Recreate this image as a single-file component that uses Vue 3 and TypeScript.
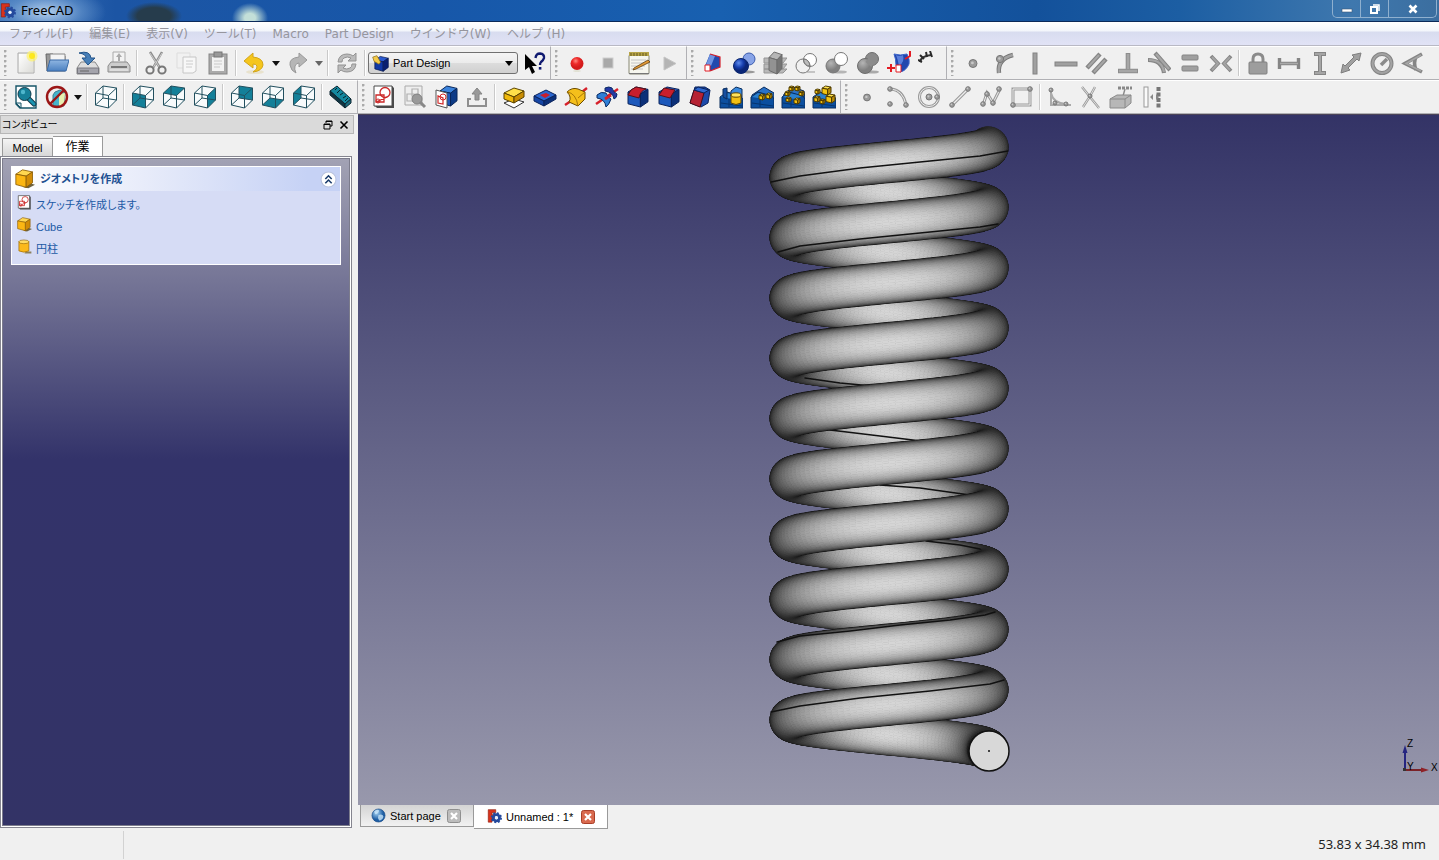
<script setup lang="ts">
import { ref } from 'vue'

type Item =
  | { kind: 'btn'; icon: string; label: string; off?: boolean }
  | { kind: 'arrow'; label: string; off?: boolean }
  | { kind: 'sep' }
  | { kind: 'combo' }

const btn = (icon: string, label: string, off = false): Item => ({ kind: 'btn', icon, label, off })
const arrow = (label: string, off = false): Item => ({ kind: 'arrow', label, off })
const sep: Item = { kind: 'sep' }

/* ---------- icon building blocks (24 x 24 grid) ---------- */

const poly = (pts: string, fill: string, stroke = 'none', w = 1) =>
  `<polygon points="${pts}" fill="${fill}" stroke="${stroke}" stroke-width="${w}" stroke-linejoin="round"/>`
const line = (d: string, stroke: string, w: number, extra = '') =>
  `<path d="${d}" fill="none" stroke="${stroke}" stroke-width="${w}" ${extra}/>`
const dot = (x: number, y: number, r = 2.3) =>
  `<circle cx="${x}" cy="${y}" r="${r}" fill="#9b9b9b" stroke="#777" stroke-width="1"/><circle cx="${x - 0.6}" cy="${y - 0.6}" r="${r * 0.35}" fill="#c8c8c8"/>`

const box = (x: number, y: number, w: number, h: number, top: string, left: string, right: string, edge: string) => {
  const a = `${x},${y + h * 0.25}`
  const b = `${x + w * 0.4},${y}`
  const c = `${x + w},${y + h * 0.12}`
  const d = `${x + w * 0.62},${y + h * 0.36}`
  const e = `${x + w * 0.62},${y + h}`
  const f = `${x},${y + h * 0.84}`
  const g = `${x + w},${y + h * 0.74}`
  return poly(`${a} ${b} ${c} ${d}`, top, edge) + poly(`${a} ${d} ${e} ${f}`, left, edge) + poly(`${d} ${c} ${g} ${e}`, right, edge)
}

const WIRE = 'M1.5 8L14.5 10.500V23L1.500 20ZM9 1L22.500 3V15L9 13ZM1.500 8L9 1M14.500 10.500L22.500 3M14.500 23L22.500 15M1.500 20L9 13'
const viewCube = (face: string) =>
  poly('1.5,8 9,1 22.5,3 22.5,15 14.5,23 1.5,20', '#f8fbfc') + (face ? poly(face, '#148099') : '') + line(WIRE, '#22505f', 1)

const sketch = (c: string, edge: string) =>
  `<path d="M3 1H20L22 3V23H5L2 20V2Z" fill="${edge}"/><path d="M2 1H20V21H2Z" fill="#fff" stroke="${edge}" stroke-width="1"/>` +
  `<circle cx="13" cy="7.5" r="5" fill="none" stroke="${c}" stroke-width="1.3"/>` +
  line('M4 10H12V17H4ZM4 17L15 12', c, 1.3) + `<circle cx="6" cy="16" r="2" fill="none" stroke="${c}"/>`

const terrain = poly('1,12 8,7 22,11 24,14 24,23 1,23', '#0b4f9f', '#092c5c') + poly('2,12 8,8 21,11 14,14', '#2a80cf') +
  line('M2 18L23 21M10 14V22', '#06356f', 1)
const goldBit = (x: number, y: number, s = 5) => box(x, y, s, s, '#ffe14a', '#f3c412', '#b88a06', '#4e3b00')
const noteBook = '<rect x="2" y="4" width="20" height="19" rx="1" fill="#f6f6ee" stroke="#888874"/><rect x="2" y="1" width="20" height="4" fill="#b7a447"/><path d="M4 2V5M7 2V5M10 2V5M13 2V5M16 2V5M19 2V5" stroke="#625820" stroke-width="1"/><path d="M4 9H19M4 12H19M4 15H18M4 18H16" stroke="#c4c4c4"/><path d="M7 17L21 9L23 11L9 18L6 19Z" fill="#e39a34" stroke="#5d3d11" stroke-width=".8"/><path d="M2 22.5H22" stroke="#777" />'

const icons: Record<string, string> = {
  logo: '<path d="M2 1H14V6H8V9H12V14H8V21H2Z" fill="#d8321c" stroke="#8e1a0c"/><circle cx="15" cy="14" r="5" fill="none" stroke="#254a9d" stroke-width="4.5"/><circle cx="15" cy="14" r="7.5" fill="none" stroke="#254a9d" stroke-width="3" stroke-dasharray="3 2.9"/><circle cx="15" cy="14" r="2.4" fill="#e8eefc"/>',
  new: '<path d="M4 2H20V22H4Z" fill="#f1f1ee" stroke="#aaa"/><path d="M5 3H19V21H5Z" fill="url(#paper)"/><circle cx="18" cy="5" r="5.500" fill="#fff36a" opacity=".7"/><circle cx="18" cy="5" r="3" fill="#ffe600" opacity=".8"/>',
  open: '<path d="M1 3H8L10 5H20V20H2Z" fill="#999" stroke="#666"/><path d="M5 3H20V12H5Z" fill="#f4f4f4" stroke="#888"/><path d="M5 9H24L21 20H2Z" fill="url(#folder)" stroke="#3a6ba8"/>',
  save: '<path d="M5 11H19L23 17V23H1V17Z" fill="#dedede" stroke="#888"/><path d="M1.500 17H22.500V22.500H1.500Z" fill="#a4a4ac" stroke="#787880"/><path d="M4 20H13" stroke="#666"/><path d="M3 2Q14 -1 15 7H19L12 14L6 7H10Q10 3 3 2Z" fill="#477fb8" stroke="#24558a"/>',
  print: '<path d="M6 1H18V12H6Z" fill="#f3f3f3" stroke="#aaa"/><path d="M12 2L15 6H13V10H11V6H9Z" fill="#aaa"/><path d="M4 11H20L23 15V21H1V15Z" fill="#ccc" stroke="#8c8c8c"/><path d="M4 16H20" stroke="#777" stroke-width="2"/><path d="M3 19H21" stroke="#eee"/>',
  cut: line('M6 1L16 17M18 1L9 17', '#8e8e8e', 2.4) + line('M6 2L16 17M18 2L9 17', '#ddd', 0.8) + '<circle cx="6" cy="19" r="3.6" fill="none" stroke="#777" stroke-width="2"/><circle cx="18" cy="19" r="3.600" fill="none" stroke="#777" stroke-width="2"/>',
  copy: '<path d="M2 2H15V17H2Z" fill="#f1f1f1" stroke="#ddd"/><path d="M8 6H21V20L18 22H8Z" fill="#f7f7f7" stroke="#c6c6c6"/><path d="M11 10H18M11 13H18M11 16H17" stroke="#ccc"/>',
  paste: '<rect x="3" y="3" width="18" height="20" fill="#aaa" stroke="#858585"/><path d="M6 6H18V20H6Z" fill="#f2f2f2"/><rect x="8" y="1" width="8" height="5" fill="#999" stroke="#777"/><path d="M8 10H16M8 13H16M8 16H14" stroke="#c8c8c8"/>',
  undo: '<ellipse cx="12" cy="21" rx="9" ry="2" fill="#e6dfc4" opacity=".8"/><path d="M1 10L10 2V6Q20 7 20 14Q19 20 10 21Q15 18 14 15Q13 13 10 13V17Z" fill="#f5c61d" stroke="#d2a51a"/>',
  redo: '<path d="M21 9L13 2V6Q3 7 4 14Q5 20 10 22Q8 18 9 15Q10 12 13 12V16Z" fill="#b6b6b6" stroke="#999"/>',
  refresh: '<path d="M3 11Q4 3 12 3Q16 3 18 5L21 2V10H13L16 7Q12 5 9 7Q7 8 7 11Z" fill="#bbb" stroke="#939393"/><path d="M21 13Q20 21 12 21Q8 21 6 19L3 22V14H11L8 17Q12 19 15 17Q17 16 17 13Z" fill="#bbb" stroke="#939393"/>',
  part: box(4, 2, 19, 21, '#2c5bd0', '#1138a4', '#091f70', '#061650') + '<path d="M1 3L7 1L12 10L10 13L3 9Z" fill="#f3ca4a" stroke="#8c6c14"/>',
  whats: '<path d="M3 3V19L7 16L10 23L13 21L10 15H15Z" fill="#000"/><path d="M13.500 7Q14 2.500 18 2.500Q22.500 3 22 7Q21.500 9 19 11Q18 12 18 14" fill="none" stroke="#101a70" stroke-width="2.400"/><rect x="16.800" y="16" width="2.600" height="2.600" fill="#101a70"/>',
  record: '<circle cx="12" cy="12.500" r="6.500" fill="url(#red)"/><ellipse cx="12" cy="20" rx="4" ry=".8" fill="#ddc" />',
  stop: '<rect x="7" y="7" width="10" height="10" fill="#a9a9a9" stroke="#cecece"/>',
  macro: noteBook,
  play: '<path d="M6 6L18 12.500L6 19Z" fill="#b4b4b4" stroke="#c4c4c4"/>',
  loft: '<path d="M9 3L19 6V16L9 20L4 19V15Z" fill="#2149ae"/><path d="M9 3L14 5L10 15L5 14Z" fill="#6f93e2"/><path d="M9 3L19 6V16L9 20" fill="none" stroke="#d2202c" stroke-width="1.200"/><path d="M4 14H9V20H4Z" fill="#fff" stroke="#e01c24"/>',
  boolean: '<circle cx="17" cy="8" r="6" fill="#88a4e8" stroke="#3b5cae"/><ellipse cx="16" cy="21" rx="7" ry="1.500" fill="#999"/><circle cx="9" cy="15" r="7.500" fill="url(#ball)" stroke="#08246c"/>',
  section: '<path d="M1 7H24L20 12H1ZM1 13H24L20 18H1ZM1 18H24L20 22H1Z" fill="#b9b9b9" stroke="#969696"/>' + box(6, 1, 13, 22, '#b5b5b5', '#929292', '#747474', '#6c6c6c'),
  common: '<circle cx="16" cy="9" r="6.500" fill="#fff" stroke="#777"/><circle cx="9" cy="15" r="7" fill="none" stroke="#777"/><path d="M9.500 8Q15 8 16 15Q10 15 9.500 8Z" fill="#bbb" stroke="#777"/><path d="M13 21H21" stroke="#999"/>',
  cutout: '<ellipse cx="15" cy="21" rx="7" ry="1.600" fill="#b5b5b5"/><circle cx="8" cy="15" r="7" fill="url(#greyball)" stroke="#777"/><circle cx="16" cy="8" r="6.500" fill="#fff" stroke="#777"/>',
  fuse: '<ellipse cx="16" cy="21" rx="7" ry="1.600" fill="#aaa"/><circle cx="16" cy="8" r="6.500" fill="#8b8b8b" stroke="#6e6e6e"/><circle cx="9" cy="15" r="7.500" fill="url(#greyball)" stroke="#6e6e6e"/><path d="M11 9L17 14" stroke="#8c8c8c" stroke-width="5"/>',
  sweep: '<path d="M7 3Q13 5 20 3Q23 9 22 13Q19 20 13 21L9 14Q9 8 7 3Z" fill="#2147ae" stroke="#3a62c8"/><path d="M9 4Q13 6 16 4Q18 11 12 15Q11 9 9 4Z" fill="#5a7fdc"/>' + line('M23 0V5L18 8M0 17H8M4 13V21', '#e31b23', 2) + '<path d="M9 14H14V21H9Z" fill="#fff" stroke="#e31b23"/>',
  gear: line('M2 11Q3 5 13 4', '#333', 2.2) + line('M0 9L4 11M2 4L6 8M8 1L9 6M12 0L14 6', '#2a2a2a', 2),
  cpoint: dot(12, 12.5, 4),
  tangentArc: line('M7 22Q5 8 21 4', '#777', 4.4) + line('M7 22Q5 8 21 4', '#a3a3a3', 2.6) + dot(8, 8, 3.6),
  vertical: '<rect x="10" y="2" width="4" height="21" fill="#a0a0a0" stroke="#828282"/>',
  horizontal: '<rect x="1" y="11" width="22" height="4" fill="#a0a0a0" stroke="#828282"/>',
  parallel: line('M2 17L15 3M8 22L21 8', '#858585', 4.4) + line('M3 16L14 4M9 21L20 9', '#a6a6a6', 2),
  perpendicular: line('M12 2V19M2 20H22', '#8d8d8d', 4.6) + line('M12 3V18M3 20H21', '#a6a6a6', 2.6),
  tangent: line('M8 2L23 19M1 9Q15 9 17 22', '#858585', 4.2) + line('M9 3L22 18M2 9Q15 9 17 21', '#a6a6a6', 2.2),
  equal: '<rect x="4" y="4" width="16" height="5" rx="1" fill="#a0a0a0" stroke="#858585"/><rect x="4" y="15" width="16" height="5" rx="1" fill="#a0a0a0" stroke="#858585"/>',
  symmetric: line('M2 5L9 12.500L2 20M22 5L15 12.500L22 20', '#858585', 3.8) + line('M3 6L9 12.500L3 19M21 6L15 12.500L21 19', '#a3a3a3', 2),
  lock: line('M7 12V8Q7 3 12 3Q17 3 17 8V12', '#8b8b8b', 3) + '<rect x="3" y="11" width="18" height="12" rx="1" fill="#9d9d9d" stroke="#808080"/>',
  hdist: line('M2.500 7V18M21.500 7V18M3 12.500H21', '#858585', 3.4) + line('M3 12.500H21', '#aaa', 1.5),
  vdist: line('M6 3H18M6 22H18M12 3V22', '#858585', 4) + line('M7 3H17M7 22H17M12 3V22', '#a5a5a5', 2),
  length: '<path d="M22 2L20 10L18 8L9 17L11 19L2 22L4 13L6 15L15 6L13 4Z" fill="#a0a0a0" stroke="#7e7e7e"/>',
  radius: '<circle cx="12" cy="12.500" r="9.500" fill="none" stroke="#858585" stroke-width="4"/><circle cx="12" cy="12.500" r="9.500" fill="none" stroke="#a3a3a3" stroke-width="2"/>' + line('M11 14L17 8', '#8b8b8b', 3.5),
  angle: line('M21 3L4 12.500L21 21M15 6Q12 12 15 19', '#858585', 3.6) + line('M20 4L5 12.500L20 20', '#a5a5a5', 1.6),
  fit: '<path d="M2 1H22V23H6L2 19Z" fill="#fff" stroke="#175568" stroke-width="1.400"/><path d="M14 13L20 19" stroke="#123c4c" stroke-width="5" stroke-linecap="round"/><path d="M14 13L20 19" stroke="#1b93b0" stroke-width="3" stroke-linecap="round"/><circle cx="10.500" cy="9" r="6.500" fill="#178099" stroke="#123c4c"/><circle cx="9" cy="7" r="2.200" fill="#4fb6cc"/><path d="M2 18L7 18V23Z" fill="#dbe8ec" stroke="#175568"/>',
  style: poly('10,7 15,5 20,8 19,21 8,21 8,10', '#46b5cc', '#3d8190') + poly('14,9 20,8 19,21 14,21', '#e8f0b0') + '<circle cx="12" cy="12" r="10" fill="none" stroke="#9b1616" stroke-width="2.400"/><path d="M5 19L19 5" stroke="#9b1616" stroke-width="2.400"/>',
  axo: viewCube(''),
  front: viewCube('1.5,8 14.5,10.5 14.5,23 1.5,20'),
  top: viewCube('1.5,8 9,1 22.5,3 14.5,10.5'),
  right: viewCube('14.5,10.5 22.5,3 22.5,15 14.5,23'),
  rear: viewCube('9,1 22.5,3 22.5,15 9,13'),
  bottom: viewCube('1.5,20 14.5,23 22.5,15 9,13'),
  left: viewCube('1.5,8 9,1 9,13 1.5,20'),
  measure: poly('1,6 8,1 22,14 16,19', '#15889f', '#0d2733') + poly('1,6 16,19 16,23 1,10', '#123542', '#0d2733') + poly('16,19 22,14 22,18 16,23', '#1a6a7d', '#0d2733') + line('M8 3L6 5M11 5L8 8M14 8L11 10M17 11L14 13M19 13L16 16', '#06222b', 1),
  sketch: sketch('#cb2a2a', '#4a4a4a'),
  viewSketch: '<path d="M2 1H19V20H2Z" fill="#eee" stroke="#aaa"/>' + line('M4 9H11V16H4ZM9 4H15V11H9Z', '#b0b0b0', 1.2) + '<circle cx="14" cy="14" r="5" fill="#9a9a9a" stroke="#808080"/><path d="M17 17L22 22" stroke="#888" stroke-width="3"/>',
  mapSketch: box(6, 1, 17, 20, '#3b83dc', '#1f5bbd', '#0c3a86', '#082659') + '<path d="M2 5L13 8V23L2 20Z" fill="#fff" stroke="#555"/><circle cx="9" cy="12" r="3" fill="none" stroke="#d12a2a"/>' + line('M4 11V18L9 19V13Z', '#d12a2a', 1.2),
  leave: '<path d="M12 3L17 9H14V15H10V9H7Z" fill="#999" stroke="#858585"/>' + line('M6 14H3V21H21V14H18', '#8f8f8f', 2),
  pad: poly('2,18 12,14 22,17 12,23', '#fff', '#333') + poly('2,8 12,3 22,6 12,12', '#ffe04a', '#5a4300') + poly('2,8 12,12 12,18 2,14', '#f0b90a', '#5a4300') + poly('12,12 22,6 22,12 12,18', '#c98d04', '#5a4300'),
  pocket: poly('1,11 13,5 23,10 11,16', '#2b66cf', '#0a235c') + poly('1,11 11,16 11,21 1,16', '#1546a5', '#0a235c') + poly('11,16 23,10 23,14 11,21', '#0c3079', '#0a235c') + poly('7,10 13,8 17,10 12,13', '#c81e2c'),
  revolve: line('M1 20L7 16M18 7L23 3', '#d6202a', 2.4) + '<path d="M3 7Q8 2 14 4L21 7L21 14L14 21L5 17Q8 12 3 7Z" fill="#f5bf1b" stroke="#6c4c00"/><path d="M3 7Q12 8 14 21M14 13L21 7" fill="none" stroke="#a87808"/>',
  groove: line('M1 19L23 4', '#d6202a', 2.4) + '<path d="M2 10Q6 6 11 8Q13 13 16 14Q14 20 11 22Q10 14 2 13Z" fill="#2f7fd6" stroke="#0a2a63"/><path d="M10 3Q14 1 17 3Q18 7 22 9Q22 13 19 14Q18 7 10 6Z" fill="#2438a4" stroke="#0a2a63"/>' + line('M10 14L16 10', '#d6202a', 3),
  fillet: box(2, 2, 20, 20, '#2b66cf', '#1c58bb', '#0c3079', '#0a235c') + '<path d="M2 10Q4 4 10 2L20 4Q14 6 13 13Z" fill="#c81e2c" stroke="#57101a"/>',
  chamfer: box(2, 2, 20, 20, '#2b66cf', '#1c58bb', '#0c3079', '#0a235c') + poly('2,10 7,3 18,5 13,13', '#c81e2c', '#57101a'),
  draft: poly('7,2 17,2 22,5 20,18 13,22 2,18', '#1c4aaa', '#0a235c') + poly('6,5 16,8 12,22 2,18', '#b62233', '#4a0c16') + poly('6,5 10,2 21,5 16,8', '#2f68cf', '#0a235c'),
  mirror: terrain + poly('4,8 4,4 8,3 8,14 4,12', '#164fa0', '#092c5c') + poly('12,6 17,2 23,4 23,12 12,11', '#3b8add', '#092c5c') + '<path d="M12 10V18Q17 21 22 18V10Z" fill="#f2c012" stroke="#5c4300"/><ellipse cx="17" cy="10" rx="5" ry="2.200" fill="#ffe45a" stroke="#5c4300"/>',
  linear: poly('2,10 14,2 24,8 24,14 2,14', '#2a72c8', '#092c5c') + terrain + goldBit(9, 9, 6) + goldBit(16, 8, 6),
  polar: poly('3,9 12,2 23,6 24,14 2,14', '#2a72c8', '#092c5c') + terrain + goldBit(4, 6) + goldBit(8, 1) + goldBit(14, 1) + goldBit(18, 6) + goldBit(13, 13, 6) + goldBit(5, 12),
  multi: terrain + goldBit(2, 11, 6) + goldBit(3, 4, 5) + goldBit(10, 1, 9) + goldBit(14, 9, 9) + goldBit(8, 14, 5),
  point: dot(12, 12.5, 3.4),
  arc: line('M5 4Q17 5 20 20', '#999', 3) + line('M5 4Q17 5 20 20', '#eee', 1) + dot(4, 4) + dot(4, 19) + dot(20, 20),
  circle: '<circle cx="12" cy="12" r="9.500" fill="none" stroke="#999" stroke-width="3"/><circle cx="12" cy="12" r="9.500" fill="none" stroke="#eee"/>' + dot(12, 12, 3) + dot(20, 12),
  lineTool: line('M4 20L20 4', '#999', 3.4) + line('M4 20L20 4', '#eee', 1.2) + dot(4, 20) + dot(20, 4),
  polyline: line('M4 20L8 8L14 18L21 4', '#999', 3) + line('M4 20L8 8L14 18L21 4', '#eee', 1) + dot(4, 19) + dot(8, 9) + dot(14, 18) + dot(20, 4),
  rect: '<path d="M3 4H20V20H3Z" fill="none" stroke="#999" stroke-width="3"/><path d="M3 4H20V20H3Z" fill="none" stroke="#eee"/>' + dot(20, 4) + dot(3, 20),
  sfillet: line('M4 4V20H24M4 8Q6 18 19 19', '#aaa', 2) + dot(4, 5, 2) + dot(8, 18, 2) + dot(19, 19, 2),
  trim: line('M4 2Q12 12 21 23M17 2Q12 12 5 22', '#999', 2.4) + line('M4 2Q12 12 21 23M17 2Q12 12 5 22', '#eee', 0.8) + dot(12, 11, 2),
  external: line('M9 3H23', '#888', 3, 'stroke-dasharray="3 1"') + line('M16 4L14 11', '#888', 1.4) + '<path d="M1 14L8 10H22V18L16 23H1Z" fill="#b7b7b7" stroke="#8a8a8a"/><path d="M1 14H16V23M16 14L22 10" fill="none" stroke="#8a8a8a"/>',
  mirrorSketch: '<rect x="4" y="2" width="4" height="20" fill="#fafafa" stroke="#999"/><path d="M18.500 2V23" stroke="#777" stroke-width="4" stroke-dasharray="4 1.500"/><path d="M10 12L13 9V15ZM16 9V15L19 12Z" fill="#888"/>',
  cube: poly('18,17 24,19 16,23 10,22', '#6d6240') + box(1, 1, 20, 21, '#ffd750', '#fbb613', '#d18b06', '#8a5b04'),
  cylinder: '<path d="M14 20H23V23H12Z" fill="#8d815c"/><path d="M3 4V19Q11 23 19 19V4Z" fill="#fbb91b" stroke="#936304"/><ellipse cx="11" cy="4.500" rx="8" ry="3" fill="#ffdc63" stroke="#936304"/>',
  globe: '<circle cx="12" cy="12" r="10.500" fill="url(#globe)" stroke="#1c4c86"/><path d="M5 6Q9 1 13 4Q12 9 7 10ZM12 11Q19 9 20 14Q18 20 13 20Q10 15 12 11Z" fill="#c9e6fa" opacity=".8"/>',
}

/* ---------- toolbars ---------- */

const rows: Item[][][] = [
  [
    [
      btn('new', '新規'), btn('open', '開く'), btn('save', '保存'), btn('print', '印刷', true), sep,
      btn('cut', '切り取り', true), btn('copy', 'コピー', true), btn('paste', '貼り付け', true), sep,
      btn('undo', '元に戻す'), arrow('元に戻す履歴'), btn('redo', 'やり直す', true), arrow('やり直す履歴', true), sep,
      btn('refresh', '更新', true), sep, { kind: 'combo' }, btn('whats', "What's This?"),
    ],
    [btn('record', 'マクロ記録'), btn('stop', '停止', true), btn('macro', 'マクロ'), btn('play', '実行', true)],
    [
      btn('loft', 'Loft'), btn('boolean', 'Boolean'), btn('section', 'Section', true), btn('common', 'Common', true),
      btn('cutout', 'Cut', true), btn('fuse', 'Fuse', true), btn('sweep', 'Sweep'), btn('gear', 'Gear'),
    ],
    [
      ...['cpoint', 'tangentArc', 'vertical', 'horizontal', 'parallel', 'perpendicular', 'tangent', 'equal', 'symmetric'].map((n) => btn(n, n, true)),
      sep,
      ...['lock', 'hdist', 'vdist', 'length', 'radius', 'angle'].map((n) => btn(n, n, true)),
    ],
  ],
  [
    [
      btn('fit', 'Fit all'), btn('style', 'Draw style'), arrow('Draw style menu'), sep, btn('axo', 'Axometric'), sep,
      btn('front', 'Front'), btn('top', 'Top'), btn('right', 'Right'), sep,
      btn('rear', 'Rear'), btn('bottom', 'Bottom'), btn('left', 'Left'), sep, btn('measure', 'Measure'),
    ],
    [
      btn('sketch', 'Sketch'), btn('viewSketch', 'View sketch', true), btn('mapSketch', 'Map sketch'), btn('leave', 'Leave sketch', true), sep,
      ...['pad', 'pocket', 'revolve', 'groove', 'fillet', 'chamfer', 'draft', 'mirror', 'linear', 'polar', 'multi'].map((n) => btn(n, n)),
    ],
    [
      ...['point', 'arc', 'circle', 'lineTool', 'polyline', 'rect'].map((n) => btn(n, n, true)),
      sep,
      ...['sfillet', 'trim', 'external', 'mirrorSketch'].map((n) => btn(n, n, true)),
    ],
  ],
]

const menus = ['ファイル(F)', '編集(E)', '表示(V)', 'ツール(T)', 'Macro', 'Part Design', 'ウインドウ(W)', 'ヘルプ (H)']
const workbench = ref('Part Design')
const tasks = [
  { icon: 'sketch', text: 'スケッチを作成します。' },
  { icon: 'cube', text: 'Cube' },
  { icon: 'cylinder', text: '円柱' },
]

/* ---------- spring geometry ---------- */

const TURNS = 10
const AXIS_X = 531
const TOP_Y = 33
const COIL_R = 99
const WIRE_R = 20
const PITCH = 60.3
const RISE = PITCH / (2 * Math.PI)

const helix = (from: number, to: number) => {
  const steps = Math.max(2, Math.ceil((to - from) / 0.06))
  const pts: string[] = []
  for (let i = 0; i <= steps; i++) {
    const t = from + ((to - from) * i) / steps
    pts.push(`${(AXIS_X + COIL_R * Math.cos(t)).toFixed(1)} ${(TOP_Y + RISE * t).toFixed(1)}`)
  }
  return 'M' + pts.join('L')
}
const whole = helix(0, TURNS * 2 * Math.PI)
const frontRim = Array.from({ length: TURNS }, (_, i) => helix(i * 2 * Math.PI + 0.4, i * 2 * Math.PI + Math.PI - 0.4)).join('')

// Surface of the wire at angle t along the coil and v around the wire.
const surface = (t: number, v: number) => {
  const len = Math.hypot(COIL_R, RISE)
  const nx = Math.cos(v) * Math.cos(t) - (Math.sin(v) * RISE * Math.sin(t)) / len
  const ny = Math.cos(v) * Math.sin(t) + (Math.sin(v) * RISE * Math.cos(t)) / len
  const nz = (-Math.sin(v) * COIL_R) / len
  return {
    x: AXIS_X + COIL_R * Math.cos(t) + WIRE_R * nx,
    y: TOP_Y + RISE * t + WIRE_R * nz,
    depth: COIL_R * Math.sin(t) + WIRE_R * ny,
    facing: ny,
  }
}

interface Facet {
  id: string
  points: string
  fill: string
  depth: number
}
const mesh = (from: number): Facet[] => {
  const along = 56
  const around = 48
  const facets: Facet[] = []
  for (let i = 0; i < along; i++) {
    for (let j = 0; j < around; j++) {
      const t0 = from + (Math.PI * i) / along
      const t1 = from + (Math.PI * (i + 1)) / along
      const v0 = (2 * Math.PI * j) / around
      const v1 = (2 * Math.PI * (j + 1)) / around
      const corners = [surface(t0, v0), surface(t1, v0), surface(t1, v1), surface(t0, v1)]
      if (Math.max(...corners.map((c) => c.facing)) <= 0) continue
      const mid = surface((t0 + t1) / 2, (v0 + v1) / 2)
      const g = Math.round(22 + 192 * Math.max(0, mid.facing))
      facets.push({
        id: `${i}-${j}`,
        points: corners.map((c) => `${c.x.toFixed(2)},${c.y.toFixed(2)}`).join(' '),
        fill: `rgb(${g},${g},${g})`,
        depth: mid.depth,
      })
    }
  }
  return facets.sort((a, b) => a.depth - b.depth)
}
const frontMesh = mesh(0)
const backMesh = mesh(Math.PI)
const offsets = Array.from({ length: TURNS }, (_, i) => Math.round(i * PITCH * 10) / 10)

const seams = [
  'M413 68L442 62L502 54L572 47L622 42L650 37',
  'M420 138L442 132L502 125L572 118L622 113L640 110',
  'M447 264L482 269L514 272',
  'M472 316L522 322L563 327',
  'M522 371L562 374L612 381',
  'M568 427L602 431L622 435L625 438L612 442',
  'M419 528L442 522L492 517L542 511L592 506L627 501L637 498',
  'M413 598L442 592L502 584L572 577L632 570L646 566',
]
</script>

<template>
  <div class="app">
    <svg class="defs" aria-hidden="true">
      <defs>
        <linearGradient id="paper" x1="0" y1="0" x2="1" y2="1"><stop offset="0" stop-color="#fff" /><stop offset="1" stop-color="#dcdcd8" /></linearGradient>
        <linearGradient id="folder" x1="0" y1="0" x2="0" y2="1"><stop offset="0" stop-color="#8fb6e2" /><stop offset="1" stop-color="#4b80c0" /></linearGradient>
        <radialGradient id="red" cx=".4" cy=".3"><stop offset="0" stop-color="#ff8a80" /><stop offset=".5" stop-color="#ee2a2a" /><stop offset="1" stop-color="#d41c1c" /></radialGradient>
        <radialGradient id="ball" cx=".35" cy=".3"><stop offset="0" stop-color="#5f8cec" /><stop offset=".6" stop-color="#173fae" /><stop offset="1" stop-color="#0a2577" /></radialGradient>
        <radialGradient id="greyball" cx=".35" cy=".3"><stop offset="0" stop-color="#b5b5b5" /><stop offset="1" stop-color="#808080" /></radialGradient>
        <radialGradient id="globe" cx=".35" cy=".3"><stop offset="0" stop-color="#a7d4f4" /><stop offset="1" stop-color="#1e5ea4" /></radialGradient>
      </defs>
    </svg>

    <header class="titlebar">
      <svg class="logo" viewBox="0 0 24 24" v-html="icons.logo" />
      <span class="title">FreeCAD</span>
      <div class="wincontrols">
        <button aria-label="最小化"><svg viewBox="0 0 28 16"><rect x="9" y="8" width="10" height="3" fill="#fff" stroke="#3b5878" stroke-width=".6" /></svg></button>
        <button aria-label="元のサイズに戻す"><svg viewBox="0 0 28 16"><path d="M12 4H18V10" fill="none" stroke="#fff" stroke-width="1.500" /><rect x="10" y="6" width="6" height="6" fill="none" stroke="#fff" stroke-width="2" /></svg></button>
        <button class="close" aria-label="閉じる"><svg viewBox="0 0 28 16"><path d="M10.500 4.500L17.500 11.500M17.500 4.500L10.500 11.500" stroke="#fff" stroke-width="2.600" /></svg></button>
      </div>
    </header>

    <nav class="menubar">
      <button v-for="m in menus" :key="m">{{ m }}</button>
    </nav>

    <div v-for="(row, r) in rows" :key="r" class="toolrow">
      <div v-for="(group, g) in row" :key="g" class="group" :class="{ last: g === row.length - 1 }">
        <span class="handle" />
        <template v-for="(item, i) in group" :key="i">
          <button v-if="item.kind === 'btn'" class="tool" :aria-label="item.label" :disabled="item.off">
            <svg viewBox="0 0 24 24" v-html="icons[item.icon]" />
          </button>
          <button v-else-if="item.kind === 'arrow'" class="drop" :aria-label="item.label" :disabled="item.off">
            <svg viewBox="0 0 8 5"><path d="M0 0H8L4 5Z" fill="currentColor" /></svg>
          </button>
          <span v-else-if="item.kind === 'sep'" class="sep" />
          <div v-else class="combo">
            <svg class="combo-icon" viewBox="0 0 24 24" v-html="icons.part" />
            <select v-model="workbench" aria-label="Workbench">
              <option>Part Design</option>
            </select>
            <svg class="combo-arrow" viewBox="0 0 8 5"><path d="M0 0H8L4 5Z" /></svg>
          </div>
        </template>
      </div>
    </div>

    <main class="work">
      <aside class="dock">
        <div class="dock-title">
          <span>コンボビュー</span>
          <button aria-label="フロート"><svg viewBox="0 0 10 10"><path d="M3 3V1H9V6H7M3 1.500H9M1 4H7V9H1ZM1 4.500H7" fill="none" stroke="#000" /></svg></button>
          <button aria-label="閉じる"><svg viewBox="0 0 10 10"><path d="M1.500 1.500L8.500 8.500M8.500 1.500L1.500 8.500" stroke="#000" stroke-width="1.600" /></svg></button>
        </div>
        <div class="tabs">
          <button class="tab">Model</button>
          <button class="tab active">作業</button>
        </div>
        <div class="pane">
          <div class="pane-inner">
            <section class="taskbox">
              <header>
                <svg class="task-head-icon" viewBox="0 0 24 24" v-html="icons.cube" />
                <h2>ジオメトリを作成</h2>
                <button aria-label="折りたたむ"><svg viewBox="0 0 16 16"><circle cx="8" cy="8" r="7" fill="#fff" stroke="#b9c3de" /><path d="M5 7.500L8 4.500L11 7.500M5 11.500L8 8.500L11 11.500" fill="none" stroke="#1a3c6c" stroke-width="1.500" /></svg></button>
              </header>
              <ul>
                <li v-for="t in tasks" :key="t.text">
                  <a href="#"><svg viewBox="0 0 24 24" v-html="icons[t.icon]" /><span>{{ t.text }}</span></a>
                </li>
              </ul>
            </section>
          </div>
        </div>
      </aside>

      <section class="mdi">
        <div class="viewport">
          <svg class="scene" viewBox="0 0 1081 691" role="img" aria-label="Spring">
            <defs>
              <g id="turn-back" stroke-width=".7">
                <polygon v-for="f in backMesh" :key="f.id" :points="f.points" :fill="f.fill" :stroke="f.fill" />
              </g>
              <g id="turn-front" stroke-width=".7">
                <polygon v-for="f in frontMesh" :key="f.id" :points="f.points" :fill="f.fill" :stroke="f.fill" />
              </g>
            </defs>
            <g fill="none" stroke-linecap="round" stroke-linejoin="round">
              <path :d="whole" stroke="#111" stroke-width="41" />
              <use v-for="y in offsets" :key="'b' + y" href="#turn-back" :y="y" />
              <path :d="seams.slice(2, 6).join('')" stroke="#111" stroke-width="1.500" />
              <path :d="frontRim" stroke="#111" stroke-width="42" stroke-linecap="butt" />
              <use v-for="y in offsets" :key="'f' + y" href="#turn-front" :y="y" />
              <path :d="[...seams.slice(0, 2), ...seams.slice(6)].join('')" stroke="#111" stroke-width="1.500" />
            </g>
            <circle cx="631" cy="637" r="20" fill="#d8d8d8" stroke="#111" stroke-width="1.500" />
            <circle cx="631" cy="637" r="1" fill="#111" />
          </svg>
          <svg class="axes" viewBox="0 0 40 40" aria-label="Axes">
            <path d="M6 31V11" stroke="#252580" stroke-width="2" />
            <path d="M3.500 14L6 6L8.500 14Z" fill="#252580" />
            <path d="M6 31H24" stroke="#7a2228" stroke-width="2" />
            <path d="M22 28.500L30 31L22 33.500Z" fill="#8e2228" />
            <rect x="4" y="29" width="3" height="3" fill="#333" />
            <text x="8" y="8">Z</text>
            <text x="8" y="31">Y</text>
            <text x="32" y="32">X</text>
          </svg>
        </div>
        <div class="doctabs">
          <div class="doctab">
            <svg viewBox="0 0 24 24" v-html="icons.globe" />
            <button class="doc">Start page</button>
            <button class="x" aria-label="Start page を閉じる"><svg viewBox="0 0 14 14"><rect x=".5" y=".5" width="13" height="13" rx="2" fill="#bcbcbc" stroke="#8f8f8f" /><path d="M4 4L10 10M10 4L4 10" stroke="#fff" stroke-width="2.200" /></svg></button>
          </div>
          <div class="doctab active">
            <svg viewBox="0 0 24 24" v-html="icons.logo" />
            <button class="doc">Unnamed : 1*</button>
            <button class="x" aria-label="Unnamed を閉じる"><svg viewBox="0 0 14 14"><rect x=".5" y=".5" width="13" height="13" rx="2" fill="#d9694e" stroke="#a93e28" /><path d="M4 4L10 10M10 4L4 10" stroke="#fff" stroke-width="2.200" /></svg></button>
          </div>
        </div>
      </section>
    </main>

    <footer class="status">
      <span class="msg" />
      <span class="dims">53.83 x 34.38 mm</span>
    </footer>
  </div>
</template>

<style>
body {
  margin: 0;
}
</style>

<style scoped>
.app {
  display: flex;
  flex-direction: column;
  min-height: 100vh;
  overflow: hidden;
  background: #f0f0f0;
  color: #000;
  font: 12px/16px 'Liberation Sans', 'Noto Sans CJK JP', sans-serif;
}
.app * {
  box-sizing: border-box;
}
.defs {
  position: absolute;
  width: 0;
  height: 0;
}
button {
  margin: 0;
  padding: 0;
  border: 0;
  background: none;
  font: inherit;
  color: inherit;
}
svg {
  display: block;
  flex: none;
}

.titlebar {
  display: flex;
  align-items: flex-start;
  height: 22px;
  border-bottom: 1px solid #0b2a5a;
  background:
    radial-gradient(ellipse 60px 26px at 46px 12px, rgba(190, 216, 242, 0.9), rgba(120, 165, 215, 0.5) 60%, transparent),
    radial-gradient(ellipse 28px 14px at 154px 16px, #263c4c 60%, transparent),
    radial-gradient(ellipse 18px 15px at 250px 18px, #c3dfd8 30%, transparent),
    linear-gradient(90deg, #3c73b8 0, #1c55a4 8%, #1757a9 30%, #1860b0 50%, #13519b 72%, #1c5ea3 82%, #3f78ae 94%, #3b6e9f);
}
.logo {
  width: 16px;
  height: 16px;
  margin-top: 3px;
}
.title {
  flex: 1;
  padding-left: 5px;
  font: 13px/20px 'Noto Sans', sans-serif;
}
.wincontrols {
  display: flex;
  height: 18px;
  margin-right: 2px;
  border: 1px solid #8fb0cf;
  border-top: 0;
  border-radius: 0 0 5px 5px;
}
.wincontrols button {
  width: 28px;
  border-right: 1px solid #8fb0cf;
}
.wincontrols .close {
  width: 47px;
  border-right: 0;
}
.wincontrols svg {
  width: 28px;
  height: 16px;
  margin: 0 auto;
}

.menubar {
  display: flex;
  gap: 16px;
  height: 24px;
  padding-left: 9px;
  border-bottom: 1px solid #b9b9c4;
  background: linear-gradient(#fff, #f3f6fb 9px, #d8dcef 10px, #e1e3f6);
  font: 12px/22px 'DejaVu Sans', 'Noto Sans CJK JP', sans-serif;
  color: #96969e;
}
.menubar button {
  white-space: nowrap;
}

.toolrow {
  display: flex;
  height: 34px;
  border-bottom: 1px solid #b0b0b4;
  background: #f0f0f0;
}
.group {
  display: flex;
  align-items: center;
  flex: none;
  padding-right: 1px;
  border-top: 1px solid #fff;
  border-right: 1px solid #b0b0b4;
}
.group.last {
  border-right: 0;
  flex: 1;
}
.handle {
  width: 10px;
  height: 26px;
  background: radial-gradient(circle at 1px 1px, #aaa 1px, transparent 2px) 4px 0 / 3px 5px repeat-y;
}
.tool {
  display: flex;
  justify-content: center;
  align-items: center;
  width: 31px;
  height: 30px;
}
.tool svg {
  width: 24px;
  height: 24px;
}
.drop {
  display: flex;
  justify-content: center;
  align-items: center;
  width: 12px;
  height: 30px;
  color: #111;
}
.drop:disabled {
  color: #666;
}
.drop svg {
  width: 8px;
  height: 5px;
}
.sep {
  width: 6px;
  height: 26px;
  background: linear-gradient(90deg, #c9c9c9 50%, #fff 50%) center / 2px 100% no-repeat;
}
.combo {
  position: relative;
  width: 150px;
}
.combo select {
  display: block;
  width: 100%;
  height: 22px;
  padding: 0 20px 0 24px;
  border: 1px solid #707070;
  border-radius: 3px;
  appearance: none;
  background: linear-gradient(#f4f4f4, #ebebeb 50%, #dcdcdc 51%, #d0d0d0);
  font: 11px/16px 'Liberation Sans', sans-serif;
  color: #000;
}
.combo-icon {
  position: absolute;
  left: 4px;
  top: 3px;
  width: 17px;
  height: 17px;
}
.combo-arrow {
  position: absolute;
  right: 5px;
  top: 9px;
  width: 8px;
  height: 5px;
}

.work {
  display: flex;
  flex: 1;
}
.dock {
  display: flex;
  flex-direction: column;
  flex: none;
  width: 354px;
  margin-right: 4px;
  padding-top: 1px;
}
.dock-title {
  display: flex;
  align-items: center;
  gap: 6px;
  height: 19px;
  padding: 0 4px 0 1px;
  border: 1px solid #b7b7b7;
  background: #dadada;
  font: 10px/16px 'Liberation Sans', 'Noto Sans CJK JP', sans-serif;
  font-feature-settings: 'palt';
}
.dock-title span {
  flex: 1;
}
.dock-title svg {
  width: 10px;
  height: 10px;
}
.tabs {
  display: flex;
  align-items: flex-end;
  height: 22px;
  padding: 2px 0 0 2px;
}
.tab {
  width: 51px;
  height: 18px;
  border: 1px solid #9a9a9a;
  border-bottom: 0;
  background: linear-gradient(#f4f4f4, #d8d8d8);
  font-size: 11px;
}
.tab.active {
  width: 50px;
  height: 20px;
  border-left: 0;
  background: #fff;
  font-size: 12px;
}
.pane {
  display: flex;
  flex: 1;
  width: 352px;
  margin-bottom: 1px;
  padding: 1px;
  border: 1px solid #85858f;
  background: #fff;
}
.pane-inner {
  flex: 1;
  padding: 7px 8px;
  border: 1px solid #7c7c8c;
  background: linear-gradient(#a2a2b4, #33336a 300px, #333366);
}
.taskbox {
  border: 1px solid #fff;
  background: #d6dcf5;
  color: #215aa5;
}
.taskbox header {
  display: flex;
  align-items: center;
  height: 24px;
  padding: 0 3px 0 3px;
  background: linear-gradient(90deg, #fff, #e8ecfa 40%, #c6d2f5 90%);
}
.task-head-icon {
  width: 20px;
  height: 20px;
}
.taskbox h2 {
  flex: 1;
  margin: 0;
  padding-left: 5px;
  font: bold 11px/16px 'Liberation Sans', 'Noto Sans CJK JP', sans-serif;
  font-feature-settings: 'palt';
  color: #1f5192;
}
.taskbox header svg:not(.task-head-icon) {
  width: 17px;
  height: 17px;
}
.taskbox ul {
  margin: 0;
  padding: 3px 5px 4px;
  list-style: none;
}
.taskbox a {
  display: flex;
  gap: 4px;
  height: 22px;
  color: inherit;
  text-decoration: none;
  font-size: 11px;
  line-height: 22px;
  font-feature-settings: 'palt';
}
.taskbox a svg {
  width: 15px;
  height: 15px;
  margin-top: 1px;
}

.mdi {
  display: flex;
  flex: 1;
  flex-direction: column;
  min-width: 0;
}
.viewport {
  position: relative;
  flex: 1;
  box-shadow: inset 0 1px #4b4458;
  background: linear-gradient(#333366, #9898ac);
}
.scene {
  position: absolute;
  inset: 0;
  width: 100%;
  height: 100%;
}
.axes {
  position: absolute;
  right: 0;
  bottom: 26px;
  width: 40px;
  height: 40px;
  font: 10px 'Liberation Sans', sans-serif;
}
.doctabs {
  display: flex;
  align-items: flex-start;
  height: 24px;
  padding-left: 2px;
}
.doctab {
  display: flex;
  align-items: center;
  width: 114px;
  height: 22px;
  padding: 0 12px 0 10px;
  border: 1px solid #9a9a9a;
  border-top: 0;
  background: linear-gradient(#d4d4d4, #f2f2f2);
  font-size: 11px;
}
.doctab.active {
  width: 134px;
  height: 24px;
  padding: 0 12px 0 13px;
  border-left: 0;
  background: #fff;
}
.doctab > svg {
  width: 15px;
  height: 15px;
}
.doc {
  flex: 1;
  padding-left: 4px;
  text-align: left;
  white-space: nowrap;
}
.x svg {
  width: 14px;
  height: 14px;
}

.status {
  display: flex;
  justify-content: space-between;
  align-items: flex-start;
  height: 31px;
  padding-right: 13px;
  font: 13px/31px 'Noto Sans', sans-serif;
  color: #222;
}
.msg {
  width: 124px;
  height: 28px;
  margin-top: 2px;
  border-right: 1px solid #d2d2d2;
}
</style>
